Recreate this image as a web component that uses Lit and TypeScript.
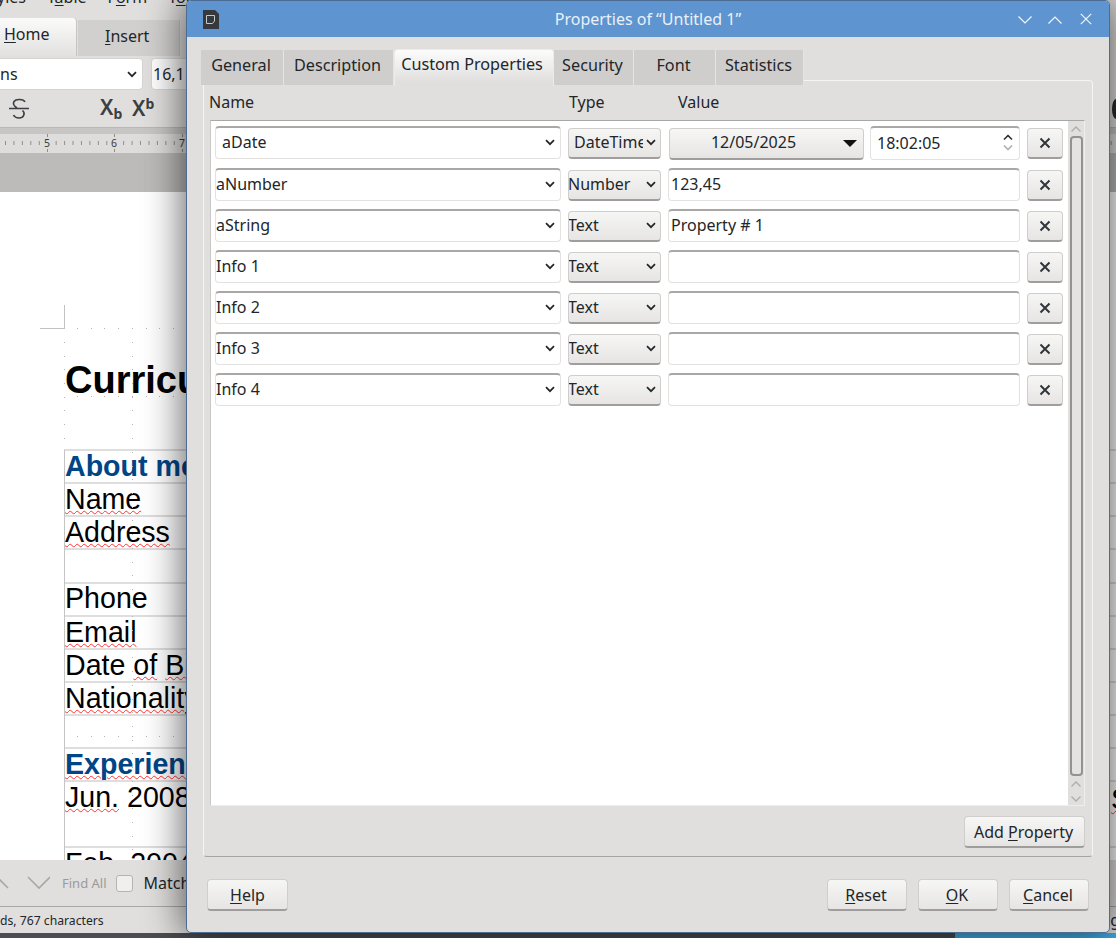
import { LitElement, html, css, svg } from "lit";
import { customElement } from "lit/decorators.js";

const chevron = (cls = "chev") => html`<svg class=${cls} width="10" height="7" viewBox="0 0 10 7"><path d="M1 1.2 5 5.2 9 1.2" fill="none" stroke="#232629" stroke-width="1.7"/></svg>`;

const rows = [
  { name: "aNumber", type: "Number", value: "123,45" },
  { name: "aString", type: "Text", value: "Property # 1" },
  { name: "Info 1", type: "Text", value: "" },
  { name: "Info 2", type: "Text", value: "" },
  { name: "Info 3", type: "Text", value: "" },
  { name: "Info 4", type: "Text", value: "" },
];

const tabs = ["General", "Description", "Custom Properties", "Security", "Font", "Statistics"];
const tabWidths = [83, 110, 160, 80, 82, 88];

const closeBtn = html`<div class="btn xbtn"><svg width="12" height="12" viewBox="0 0 12 12"><path d="M1.5 1.5 10.5 10.5M10.5 1.5 1.5 10.5" stroke="#31363b" stroke-width="2"/></svg></div>`;

const rulerTicks = () => {
  const out = [];
  for (let x = 5; x < 1116; x += 8.44) {
    out.push(svg`<rect x=${x} y="7" width="1" height="4" fill="#8f8e8d"/>`);
  }
  [48, 115, 183].forEach((x, i) => {
    out.push(svg`<rect x=${x - 1} y="0" width="1" height="3" fill="#8f8e8d"/>`);
    out.push(svg`<rect x=${x - 1} y="15" width="1" height="3" fill="#8f8e8d"/>`);
    out.push(svg`<rect x=${x - 5} y="3" width="9" height="12" fill="#dedddc"/>`);
    out.push(svg`<text x=${x - 1} y="13" text-anchor="middle" font-size="10.5" font-family="Noto Sans, sans-serif" fill="#3a3a3a">${5 + i}</text>`);
  });
  return out;
};

const docDots = () => {
  const out = [];
  const dot = (x: number, y: number) => out.push(svg`<rect x=${x} y=${y} width="1" height="1" fill="#b4b4b4"/>`);
  for (let x = 77; x < 186; x += 13.7) { dot(Math.round(x), 136); dot(Math.round(x), 204); dot(Math.round(x), 544); }
  for (let y = 150; y < 250; y += 13.7) { dot(64, Math.round(y)); dot(132, Math.round(y)); }
  for (let y = 260; y < 660; y += 13.7) dot(132, Math.round(y));
  return out;
};

@customElement("app-root")
export class AppRoot extends LitElement {
  static styles = css`
    :host { display: block; width: 1116px; height: 938px; position: relative; overflow: hidden; font-family: "Noto Sans", sans-serif; font-size: 16px; color: #232629; }
    u { text-decoration-thickness: 1px; text-underline-offset: 2px; }

    .app { height: 938px; display: flex; flex-direction: column; background: #e0dfde; overflow: hidden; }
    .menu { height: 18px; flex: none; overflow: hidden; display: flex; align-items: flex-end; gap: 21px; line-height: 18px; margin-left: -3px; }
    .menu span { display: block; margin-bottom: 12px; white-space: nowrap; }
    .apptabs { height: 38px; flex: none; display: flex; align-items: flex-end; }
    .apptab { height: 36px; display: flex; align-items: center; padding: 0 0 4px 27px; width: 102px; box-sizing: border-box; background: #d1d0cf; margin-left: 1px; border-right: 1px solid #c6c5c4; }
    .apptab.on { width: 77px; height: 38px; margin: 0; padding: 0 0 6px 4px; background: linear-gradient(#fbfbfb, #e2e1e0); border-radius: 0 4px 0 0; border-right: 1px solid #c6c5c4; }
    .tool1 { height: 34px; flex: none; display: flex; gap: 8px; align-items: center; box-sizing: border-box; padding-top: 2px; }
    .fontsel { width: 143px; height: 32px; box-sizing: border-box; background: #fff; border-radius: 0 4px 4px 0; border: 1px solid #d5d4d3; border-left: 0; display: flex; align-items: center; justify-content: space-between; padding-right: 5px; }
    .fontsize { width: 60px; height: 32px; box-sizing: border-box; background: linear-gradient(90deg, #fff, #e8e8e8); border: 1px solid #d5d4d3; border-radius: 4px; display: flex; align-items: center; padding-left: 1px; }
    .tool2 { height: 38px; flex: none; display: flex; align-items: center; box-sizing: border-box; border-bottom: 1px solid #b9b8b7; padding-left: 9px; }
    .strike { margin-right: 71px; flex: none; }
    .sub { display: flex; font-weight: 600; font-size: 21px; line-height: 24px; color: #3c3f42; width: 33px; margin-top: -2px; }
    .sub.first { width: 32px; }
    .sub small { font-size: 14px; font-weight: 700; line-height: 14px; }
    .sub .lo { margin-top: 12px; }
    .sub .hi { margin-top: 1px; }
    .blob { margin-left: auto; margin-right: -4px; width: 8px; height: 20px; border-radius: 50%; background: #2b2b2b; }
    .rulerwrap { height: 25px; flex: none; box-sizing: border-box; padding-top: 6px; background: linear-gradient(#c7c6c5 6px, #dedddc 6px); }
    .rulerwrap svg { display: block; }
    .ghost { height: 39px; flex: none; background: #bcbbba; }

    .doc { flex: 1; min-height: 0; background: #fff; position: relative; overflow: hidden; color: #000; font-family: "Liberation Sans", sans-serif; }
    .corner { width: 24px; height: 23px; margin: 113px 0 0 40px; border-right: 1px solid #c2c2c2; border-bottom: 1px solid #c2c2c2; }
    .cv { height: 120px; box-sizing: border-box; padding: 29px 0 0 65px; font-size: 38px; line-height: 44px; font-weight: 700; white-space: nowrap; }
    .tbl { margin-left: 64px; border-left: 1px solid #c4c4c4; border-top: 2px solid #dedede; }
    .row { height: 31px; border-bottom: 2px solid #dedede; font-size: 28.6px; line-height: 31px; white-space: nowrap; display: flex; }
    .row.wide { height: 32px; }
    .row.up { line-height: 29px; }
    .row.tall { height: 64px; }
    .row.h { color: #004586; font-weight: 700; }
    .sp { text-decoration: underline wavy #f33; text-decoration-thickness: 1.2px; text-underline-offset: 1px; }
    .far { margin-left: auto; margin-right: -14px; margin-top: 2px; }
    .dots { position: absolute; left: 0; top: 0; }

    .find { height: 47px; flex: none; display: flex; align-items: center; box-sizing: border-box; border-bottom: 1px solid #aaa9a8; background: #e0dfde; }
    .find .findall { font-size: 13px; color: #9a9a9a; margin-left: 12px; }
    .find .check { width: 17px; height: 17px; box-sizing: border-box; background: #f0efee; border: 1px solid #b5b4b3; border-radius: 3px; margin-left: 9px; }
    .find .match { margin-left: 11px; }
    .status { height: 26px; flex: none; display: flex; align-items: center; justify-content: space-between; font-size: 12.2px; background: #e0dfde; }
    .status b { font-weight: 400; font-size: 16px; margin-right: -4px; }
    .task { height: 5px; flex: none; display: flex; background: #4a4d51; }
    .task i { margin-left: 955px; flex: 1; background: #3daee9; }

    .dialog { position: absolute; left: 186px; top: 0; width: 924px; height: 933px; box-sizing: border-box; background: #e0dfde; border: 1px solid #4d6c94; border-radius: 5px; box-shadow: 0 0 38px 3px rgba(0,0,0,.62); display: flex; flex-direction: column; overflow: hidden; }
    .title { height: 36px; flex: none; background: #5e94cf; display: flex; align-items: center; color: #e9f0f8; position: relative; justify-content: center; font-size: 16px; }
    .appicon { position: absolute; left: 15px; top: 8px; }
    .wins { position: absolute; right: 17px; top: 15px; display: flex; gap: 16px; }
    .wins svg { display: block; }
    .wins .closex { margin-top: -3px; margin-left: 2px; }

    .body { flex: 1; min-height: 0; display: flex; flex-direction: column; padding: 12px 16px 0; }
    .tabs { display: flex; margin: 0 0 -6px -2px; position: relative; z-index: 1; flex: none; font-size: 16.2px; }
    .tab { height: 35px; margin-top: 1px; box-sizing: border-box; background: #cfcecd; display: flex; align-items: center; justify-content: center; border-right: 1px solid #e6e5e4; white-space: nowrap; padding: 0 2px 5px 0; }
    .tab.on { height: 37px; margin-top: 0; background: linear-gradient(#fcfcfc, #e0dfde 90%); border-radius: 4px 4px 0 0; border: 1px solid #ecebea; border-bottom: 0; padding: 0 4px 8px 0; }
    .pane { flex: 1; min-height: 0; box-sizing: border-box; display: flex; flex-direction: column; border: 1px solid #f5f5f4; border-bottom-color: #a5a4a3; border-radius: 4px; padding: 6px 7px 8px 6px; }
    .heads { height: 33px; flex: none; display: grid; grid-template-columns: 360px 109px 1fr; margin-left: -1px; padding-bottom: 3px; box-sizing: border-box; align-items: center; }
    .list { flex: 1; min-height: 0; display: flex; border: 1px solid #efeeed; border-top-color: #a8a7a6; border-left-color: #c9c8c7; }
    .rows { flex: 1; background: #fff; padding: 5px 0 0 4px; display: flex; flex-direction: column; gap: 8px; }
    .r { display: flex; gap: 7px; align-items: flex-start; }
    .sel, .inp { height: 33px; box-sizing: border-box; background: #fff; border: 1px solid #e3e2e1; border-top: 2px solid #a9a8a7; border-radius: 4px; display: flex; align-items: center; white-space: nowrap; overflow: hidden; padding-bottom: 2px; }
    .sel { width: 346px; justify-content: space-between; padding-right: 5px; }
    .sel.first span { margin-left: 6px; }
    .inp { width: 352px; padding-left: 2px; }
    .btn { box-sizing: border-box; background: linear-gradient(#f6f6f5, #e6e5e4); border: 1px solid #cfcecd; border-bottom: 2px solid #9f9e9d; border-radius: 4px; display: flex; align-items: center; justify-content: center; white-space: nowrap; }
    .type { width: 93px; height: 31px; margin-top: 2px; justify-content: space-between; padding: 0 4px 2px 0; overflow: hidden; }
    .type span { margin-left: -1px; }
    .type .cut { width: 69px; overflow: hidden; margin-left: 5px; }
    .xbtn { width: 36px; height: 31px; margin-top: 2px; }
    .val1 { width: 352px; display: flex; gap: 6px; }
    .date { width: 195px; height: 32px; margin: 2px 0 0 1px; position: relative; padding: 0 26px 4px 0; }
    .date svg { position: absolute; right: 6px; top: 11px; }
    .time { width: 150px; height: 34px; justify-content: space-between; padding: 0 6px 2px; }
    .spin { display: flex; flex-direction: column; gap: 3px; }
    .spin svg { display: block; }
    .sb { width: 16px; flex: none; background: #e0dfde; display: flex; flex-direction: column; align-items: center; padding: 4px 0 2px; box-sizing: border-box; }
    .sb svg { flex: none; display: block; }
    .thumb { flex: 1; width: 13px; box-sizing: border-box; margin: 3px 0 4px; border: 2px solid #939291; border-radius: 4px; background: #e4e3e2; }
    .sb .dn { margin-top: 7px; }
    .paneFoot { flex: none; display: flex; justify-content: flex-end; padding-top: 10px; }
    .add { width: 121px; height: 32px; padding-right: 2px; }
    .foot { flex: none; display: flex; padding: 22px 4px 21px; gap: 11px; }
    .foot .btn { width: 80px; height: 32px; padding-right: 2px; }
    .foot .btn.help { width: 81px; padding-right: 0; }
    .foot .grow { flex: 1; }
  `;

  render() {
    return html`
      <div class="app">
        <div class="menu"><span>yles</span><span>T<u>a</u>ble</span><span>F<u>o</u>rm</span><span>T<u>o</u>ols</span></div>
        <div class="apptabs">
          <div class="apptab on"><span><u>H</u>ome</span></div>
          <div class="apptab"><span><u>I</u>nsert</span></div>
        </div>
        <div class="tool1">
          <div class="fontsel"><span>ns</span>${chevron()}</div>
          <div class="fontsize">16,1</div>
        </div>
        <div class="tool2">
          <svg class="strike" width="20" height="21" viewBox="0 0 20 21"><path d="M16 4C14.500 1 7 0.500 5 3.500 3.800 5.500 5 8 8 10M0 10.500H20M13.500 12.500C16.500 15 15 20 10 20 7.500 20 5.500 19 4.500 17" fill="none" stroke="#3c3f42" stroke-width="1.600"/></svg>
          <div class="sub first"><span>X</span><small class="lo">b</small></div>
          <div class="sub"><span>X</span><small class="hi">b</small></div>
          <div class="blob"></div>
        </div>
        <div class="rulerwrap"><svg width="1116" height="18" viewBox="0 0 1116 18">${rulerTicks()}</svg></div>
        <div class="ghost"></div>
        <div class="doc">
          <div class="corner"></div>
          <div class="cv">Curriculum Vitae</div>
          <div class="tbl">
            <div class="row h"><span>About me</span></div>
            <div class="row"><span class="sp">Name</span></div>
            <div class="row"><span class="sp">Address</span></div>
            <div class="row wide"></div>
            <div class="row up"><span>Phone</span></div>
            <div class="row"><span class="sp">Email</span></div>
            <div class="row"><span>Date <span class="sp">of</span> <span class="sp">Birth</span></span></div>
            <div class="row"><span class="sp">Nationality</span></div>
            <div class="row"></div>
            <div class="row h"><span class="sp">Experience</span></div>
            <div class="row tall"><span><span class="sp">Jun.</span> 2008</span><span class="far sp">S</span></div>
            <div class="row"><span>Feb. 2004</span></div>
          </div>
          <svg class="dots" width="1116" height="668">${docDots()}</svg>
        </div>
        <div class="find">
          <svg width="50" height="16" viewBox="0 0 50 16"><path d="M-3 2 8 13M28 2 39 13 50 2" fill="none" stroke="#a9a8a7" stroke-width="1.600"/></svg>
          <span class="findall">Find All</span>
          <div class="check"></div>
          <span class="match">Match Case</span>
        </div>
        <div class="status"><span>ds, 767 characters</span><b>g</b></div>
        <div class="task"><i></i></div>
      </div>

      <div class="dialog">
        <div class="title">
          <svg class="appicon" width="17" height="21" viewBox="0 0 17 21"><path d="M1 1H13L17 5V20H1Z" fill="#363a3e"/><path d="M13 0 17 4V0Z" fill="#5e94cf"/><path d="M4.500 6.500H12.500V12L10.500 14.500H4.500Z" fill="none" stroke="#c8c8c8" stroke-width="1"/></svg>
          <span>Properties of “Untitled 1”</span>
          <div class="wins">
            <svg width="14" height="8" viewBox="0 0 14 8"><path d="M0.500 0.500 7 7 13.500 0.500" fill="none" stroke="#f2f6fb" stroke-width="1.200"/></svg>
            <svg width="14" height="8" viewBox="0 0 14 8"><path d="M0.500 7.500 7 1 13.500 7.500" fill="none" stroke="#f2f6fb" stroke-width="1.200"/></svg>
            <svg class="closex" width="12" height="12" viewBox="0 0 12 12"><path d="M0.800 0.800 11.200 11.200M11.200 0.800 0.800 11.200" fill="none" stroke="#f2f6fb" stroke-width="1.200"/></svg>
          </div>
        </div>
        <div class="body">
          <div class="tabs">
            ${tabs.map((t, i) => html`<div class="tab ${i === 2 ? "on" : ""}" style="width:${tabWidths[i]}px">${t}</div>`)}
          </div>
          <div class="pane">
            <div class="heads"><span>Name</span><span>Type</span><span>Value</span></div>
            <div class="list">
              <div class="rows">
                <div class="r">
                  <div class="sel first"><span>aDate</span>${chevron()}</div>
                  <div class="btn type"><span class="cut">DateTime</span>${chevron()}</div>
                  <div class="val1">
                    <div class="btn date"><span>12/05/2025</span><svg width="14" height="7" viewBox="0 0 14 7"><path d="M0 0H14L7 7Z" fill="#111"/></svg></div>
                    <div class="inp time"><span>18:02:05</span>
                      <div class="spin">
                        <svg width="10" height="7" viewBox="0 0 10 7"><path d="M1 5.500 5 1.500 9 5.500" fill="none" stroke="#232629" stroke-width="1.500"/></svg>
                        <svg width="10" height="7" viewBox="0 0 10 7"><path d="M1 1.500 5 5.500 9 1.500" fill="none" stroke="#a9a9a9" stroke-width="1.500"/></svg>
                      </div>
                    </div>
                  </div>
                  ${closeBtn}
                </div>
                ${rows.map((r) => html`
                  <div class="r">
                    <div class="sel"><span>${r.name}</span>${chevron()}</div>
                    <div class="btn type"><span>${r.type}</span>${chevron()}</div>
                    <div class="inp">${r.value}</div>
                    ${closeBtn}
                  </div>`)}
              </div>
              <div class="sb">
                <svg width="12" height="8" viewBox="0 0 12 8"><path d="M1.500 6.500 6 2 10.500 6.500" fill="none" stroke="#aeadac" stroke-width="1.300"/></svg>
                <div class="thumb"></div>
                <svg width="12" height="8" viewBox="0 0 12 8"><path d="M1.500 6.500 6 2 10.500 6.500" fill="none" stroke="#aeadac" stroke-width="1.300"/></svg>
                <svg class="dn" width="12" height="8" viewBox="0 0 12 8"><path d="M1.500 1.500 6 6 10.500 1.500" fill="none" stroke="#aeadac" stroke-width="1.300"/></svg>
              </div>
            </div>
            <div class="paneFoot"><div class="btn add"><span>Add <u>P</u>roperty</span></div></div>
          </div>
          <div class="foot">
            <div class="btn help"><span><u>H</u>elp</span></div>
            <div class="grow"></div>
            <div class="btn"><span><u>R</u>eset</span></div>
            <div class="btn"><span><u>O</u>K</span></div>
            <div class="btn"><span><u>C</u>ancel</span></div>
          </div>
        </div>
      </div>
    `;
  }
}
